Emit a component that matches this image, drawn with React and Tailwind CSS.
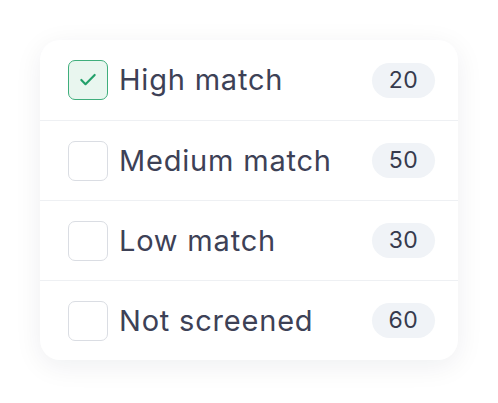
import { Check } from "lucide-react";

const rows = [
  { label: "High match", count: 20, checked: true },
  { label: "Medium match", count: 50, checked: false },
  { label: "Low match", count: 30, checked: false },
  { label: "Not screened", count: 60, checked: false },
];

export default function App() {
  return (
    <div className="min-h-screen w-full bg-white pt-10" style={{ fontFamily: "Inter, 'Noto Sans', sans-serif" }}>
      <div className="mx-auto w-[418px] rounded-[20px] bg-white shadow-[0_6px_28px_rgba(20,30,50,0.07)]">
        {rows.map((r, i) => (
          <div
            key={r.label}
            className={`flex h-[80px] items-center pl-[28px] pr-[23px] ${i > 0 ? "border-t border-[#eef0f3]" : ""}`}
          >
            {r.checked ? (
              <div className="flex h-10 w-10 shrink-0 items-center justify-center rounded-[7px] border border-[#3fae7c] bg-[#e9f6ef]">
                <Check size={20} strokeWidth={2.6} className="text-[#23a06a]" />
              </div>
            ) : (
              <div className="h-10 w-10 shrink-0 rounded-[7px] border border-[#dadde3] bg-white" />
            )}
            <span className="ml-[11px] flex-1 text-[29px] font-normal tracking-[0.8px] text-[#3d4156]">{r.label}</span>
            <span className="flex h-[35px] w-[63px] items-center justify-center rounded-full bg-[#f0f3f7] text-[23px] font-normal tracking-[0.5px] text-[#363a4d]">
              {r.count}
            </span>
          </div>
        ))}
      </div>
    </div>
  );
}
